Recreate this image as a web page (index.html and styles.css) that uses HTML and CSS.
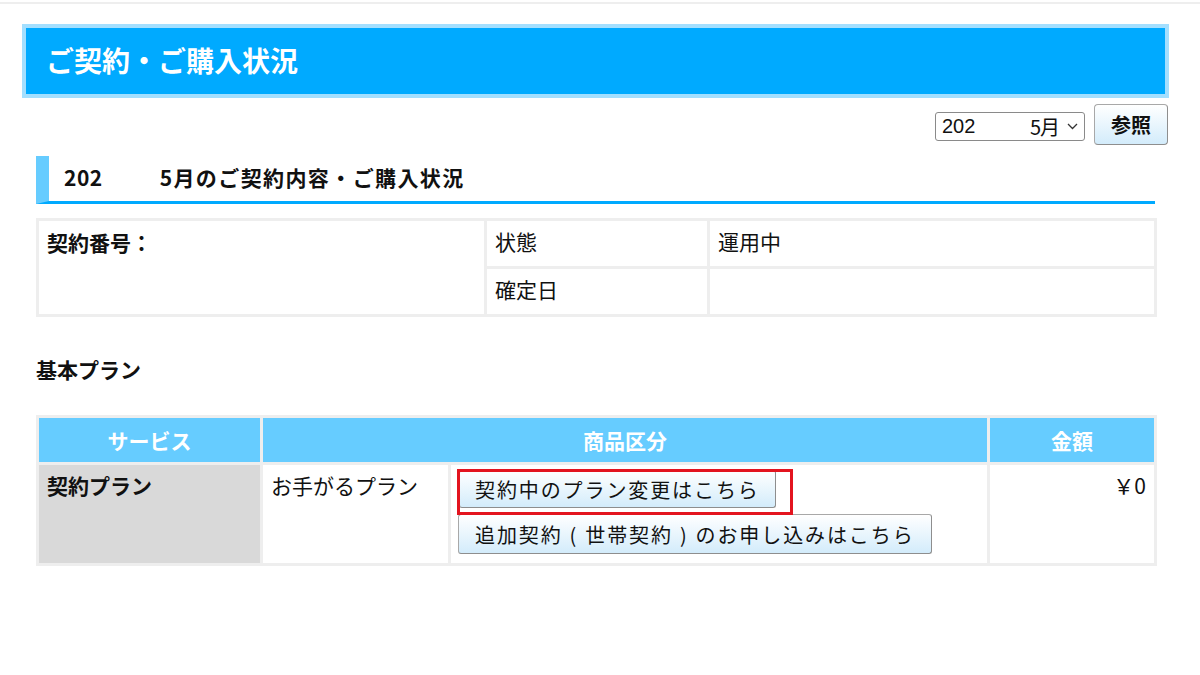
FILE: index.html
```html
<!DOCTYPE html>
<html lang="ja">
<head>
    <meta charset="UTF-8">
    <title>ご契約・ご購入状況</title>
    <link rel="stylesheet" href="styles.css">
</head>
<body>
    <div class="topline"></div>
    <div class="page">
        <h1 class="page-title">ご契約・ご購入状況</h1>

        <div class="toolbar">
            <div class="month-select">
                <span class="ms-year">202</span>
                <span class="ms-mask"></span>
                <span class="ms-month">5月</span>
                <svg class="ms-arrow" width="11" height="7" viewBox="0 0 11 7"><path d="M1 1 L5.5 5.5 L10 1" fill="none" stroke="#333" stroke-width="1.3"/></svg>
            </div>
            <button class="btn btn-ref">参照</button>
        </div>

        <div class="content">
            <h2 class="section-title"><span class="yr">202</span><span class="yr-gap"></span>5月のご契約内容・ご購入状況</h2>

            <table class="info-table">
                <colgroup>
                    <col style="width:448px">
                    <col style="width:223px">
                    <col style="width:447px">
                </colgroup>
                <tr>
                    <th rowspan="2" class="cno">契約番号：</th>
                    <td>状態</td>
                    <td>運用中</td>
                </tr>
                <tr>
                    <td>確定日</td>
                    <td></td>
                </tr>
            </table>

            <h3 class="sub-title">基本プラン</h3>

            <table class="plan-table">
                <colgroup>
                    <col style="width:224px">
                    <col style="width:188px">
                    <col style="width:539px">
                    <col style="width:167px">
                </colgroup>
                <tr class="head">
                    <th>サービス</th>
                    <th colspan="2">商品区分</th>
                    <th>金額</th>
                </tr>
                <tr class="body">
                    <th class="svc">契約プラン</th>
                    <td>お手がるプラン</td>
                    <td class="actions">
                        <span class="marked"><button class="btn btn-plan">契約中のプラン変更はこちら</button></span>
                        <button class="btn btn-plan btn-wide">追加契約<span class="paren">(</span>世帯契約<span class="paren">)</span>のお申し込みはこちら</button>
                    </td>
                    <td class="price">￥0</td>
                </tr>
            </table>
        </div>
    </div>
</body>
</html>
```

FILE: styles.css
```css
* {
    margin: 0;
    padding: 0;
    box-sizing: border-box;
}

body {
    font-family: "Noto Sans CJK JP", "Liberation Sans", sans-serif;
    color: #111;
    background: #fff;
}

.topline {
    height: 2px;
    margin-top: 2px;
    background: #eeeeee;
}

.page {
    padding: 20px 31px 0 22px;
}

.page-title {
    height: 74px;
    background: #00aaff;
    border: 4px solid #a3dfff;
    color: #fff;
    font-size: 28px;
    font-weight: bold;
    line-height: 64px;
    padding-left: 20px;
}

.toolbar {
    display: flex;
    justify-content: flex-end;
    align-items: center;
    gap: 9px;
    margin-top: 6px;
    padding-right: 1px;
}

.month-select {
    display: flex;
    align-items: center;
    width: 150px;
    height: 29px;
    margin-top: 4px;
    border: 1px solid #8a8a8a;
    border-radius: 3px;
    padding: 0 6px;
    font-family: "Liberation Sans", "Noto Sans CJK JP", sans-serif;
    font-size: 20px;
}

.ms-mask {
    flex: 1;
}

.ms-month {
    font-family: "Noto Sans CJK JP", sans-serif;
    font-size: 20px;
    letter-spacing: -1px;
    line-height: 1;
}

.ms-arrow {
    margin-left: 8px;
}

.btn {
    font-family: "Noto Sans CJK JP", sans-serif;
    color: #111;
    background: linear-gradient(#ffffff, #d3ecfb);
    border: 1px solid #a8a8a8;
    border-right-color: #8e8e8e;
    border-bottom-color: #8e8e8e;
    border-radius: 4px;
    cursor: pointer;
}

.btn-ref {
    width: 74px;
    height: 41px;
    font-size: 20px;
    font-weight: bold;
}

.content {
    padding: 0 14px;
}

.section-title {
    margin-top: 11px;
    height: 48px;
    border-left: 13px solid #66ccff;
    border-bottom: 3px solid #00aaff;
    padding-left: 15px;
    font-size: 21px;
    font-weight: bold;
    letter-spacing: 1.4px;
    line-height: 42px;
}

.yr {
    letter-spacing: 0.5px;
}

.yr-gap {
    display: inline-block;
    width: 57px;
}

table {
    width: 1118px;
    border-collapse: collapse;
    table-layout: fixed;
    font-size: 21px;
}

th, td {
    border: 3px solid #eeeeee;
    text-align: left;
    vertical-align: top;
    font-weight: normal;
}

.info-table {
    margin-top: 14px;
}

.info-table td, .info-table th {
    height: 48px;
    padding: 5px 8px;
    line-height: 30px;
}

.info-table .cno {
    font-weight: bold;
    padding-top: 6px;
}

.sub-title {
    margin-top: 37px;
    font-size: 21px;
    font-weight: bold;
    line-height: 30px;
}

.plan-table {
    margin-top: 31px;
}

.plan-table .head th {
    height: 47px;
    background: #66ccff;
    color: #fff;
    font-weight: bold;
    text-align: center;
    vertical-align: middle;
    font-size: 21px;
}

.plan-table .body td, .plan-table .body th {
    height: 101px;
    padding: 5px 8px;
    line-height: 30px;
}

.plan-table .svc {
    background: #d9d9d9;
    font-weight: bold;
}

.plan-table .actions {
    padding: 5px 8px;
}

.plan-table .price {
    text-align: right;
    padding-right: 9px;
}

.marked {
    position: relative;
    display: inline-block;
}

.marked::after {
    content: "";
    position: absolute;
    left: -2px;
    top: -1px;
    width: 330px;
    height: 40px;
    border: 3px solid #e3141f;
}

.btn-plan {
    display: block;
    height: 38px;
    padding: 0 15px;
    font-size: 20px;
    letter-spacing: 1.9px;
    text-align: left;
    border-radius: 3px;
    white-space: nowrap;
}

.marked .btn-plan {
    width: 317px;
}

.btn-wide {
    width: 474px;
    height: 40px;
    margin-top: 6px;
    margin-left: -1px;
    padding-left: 16px;
}

.paren {
    display: inline-block;
    padding: 0 7px;
}
```
